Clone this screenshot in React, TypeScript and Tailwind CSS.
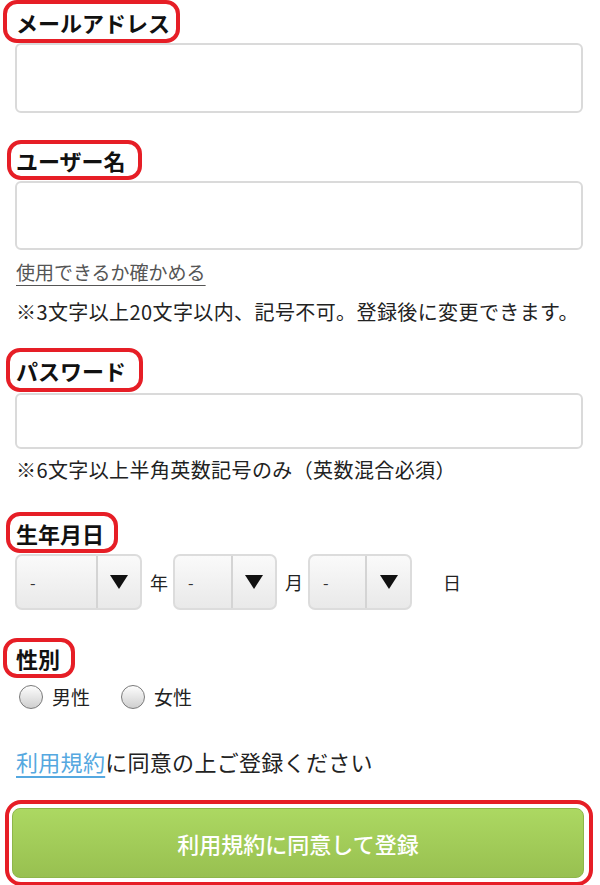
import { useState } from 'react';

const FONT = { fontFamily: '"Noto Sans CJK JP", "Noto Sans", sans-serif' };

function Label({ text, className }: { text: string; className: string }) {
  return (
    <div
      className={`flex items-center rounded-[14px] border-4 border-[#e61e26] text-[22px] font-bold leading-none text-[#111] ${className}`}
    >
      {text}
    </div>
  );
}

function TextInput({ className }: { className: string }) {
  return (
    <input
      type="text"
      className={`mx-[15px] block w-[568px] rounded-[6px] border-2 border-[#dadada] bg-white px-3 text-[19px] outline-none ${className}`}
    />
  );
}

function DateSelect({ width, left }: { width: string; left: string }) {
  return (
    <div
      className={`flex h-[56px] overflow-hidden rounded-[7px] border-2 border-[#dcdcdc] bg-gradient-to-b from-[#fafafa] to-[#e9e9e9] ${width}`}
    >
      <div className={`flex items-center pl-[13px] text-[16px] text-[#333] ${left}`}>-</div>
      <div className="flex flex-1 items-center justify-center border-l-2 border-[#d4d4d4]">
        <svg width="18" height="14" viewBox="0 0 18 14">
          <polygon points="0,0 18,0 9,14" fill="#111" />
        </svg>
      </div>
    </div>
  );
}

function Radio({ label, checked, onClick }: { label: string; checked: boolean; onClick: () => void }) {
  return (
    <button type="button" onClick={onClick} className="flex items-center gap-[9px]">
      <span className="flex h-[24px] w-[24px] items-center justify-center rounded-full border border-[#7a7a7a] bg-gradient-to-b from-[#fdfdfd] to-[#cfcfcf]">
        {checked ? <span className="h-[10px] w-[10px] rounded-full bg-[#333]" /> : null}
      </span>
      <span className="text-[19px] text-[#222]">{label}</span>
    </button>
  );
}

export default function App() {
  const [gender, setGender] = useState<'male' | 'female' | null>(null);

  return (
    <div className="h-[885px] w-[600px] overflow-hidden bg-white" style={FONT}>
      <Label text="メールアドレス" className="ml-[3px] h-[43px] w-[177px] pl-[9px]" />
      <TextInput className="h-[70px]" />

      <Label text="ユーザー名" className="ml-[7px] mt-[27px] h-[40px] w-[135px] pl-[5px]" />
      <TextInput className="mt-[1px] h-[69px]" />

      <div className="ml-[16px] mt-[8px] h-[28px] text-[19px] leading-[28px] text-[#555] underline underline-offset-[5px]">
        使用できるか確かめる
      </div>
      <div className="ml-[16px] mt-[12px] h-[28px] whitespace-nowrap text-[20px] leading-[28px] tracking-[0.4px] text-[#222]">
        ※3文字以上20文字以内、記号不可。登録後に変更できます。
      </div>

      <Label text="パスワード" className="ml-[6px] mt-[22px] h-[44px] w-[137px] pl-[6px]" />
      <input
        type="password"
        className="mx-[15px] mt-[1px] block h-[56px] w-[568px] rounded-[6px] border-2 border-[#dadada] bg-white px-3 outline-none"
      />
      <div className="ml-[16px] mt-[7px] h-[28px] whitespace-nowrap text-[20px] leading-[28px] tracking-[0.4px] text-[#222]">
        ※6文字以上半角英数記号のみ（英数混合必須）
      </div>

      <Label text="生年月日" className="ml-[6px] mt-[28px] h-[41px] w-[112px] pl-[6px]" />
      <div className="ml-[15px] mt-[1px] flex items-center text-[18px] text-[#222]">
        <DateSelect width="w-[127px]" left="w-[79px]" />
        <span className="ml-[8px] mr-[5px]">年</span>
        <DateSelect width="w-[104px]" left="w-[56px]" />
        <span className="ml-[8px] mr-[5px]">月</span>
        <DateSelect width="w-[104px]" left="w-[55px]" />
        <span className="ml-[31px]">日</span>
      </div>

      <Label text="性別" className="ml-[3px] mt-[28px] h-[40px] w-[72px] pl-[9px]" />
      <div className="ml-[19px] mt-[5px] flex h-[28px] items-center gap-[31px]">
        <Radio label="男性" checked={gender === 'male'} onClick={() => setGender('male')} />
        <Radio label="女性" checked={gender === 'female'} onClick={() => setGender('female')} />
      </div>

      <div className="ml-[16px] mt-[35px] h-[30px] text-[22px] leading-[30px] tracking-[0.3px] text-[#222]">
        <a href="#" className="text-[#55a8e0] underline underline-offset-[5px]">
          利用規約
        </a>
        に同意の上ご登録ください
      </div>

      <div className="ml-[5px] mt-[24px] h-[86px] w-[588px] rounded-[16px] border-4 border-[#e61e26] px-[1px] pt-[2px]">
        <div className="rounded-[10px] border-2 border-white">
          <button
            type="button"
            className="flex h-[70px] w-[572px] items-center justify-center rounded-[8px] border border-[#8db64a] bg-gradient-to-b from-[#acd862] to-[#98c050] text-[22px] font-medium text-white"
          >
            利用規約に同意して登録
          </button>
        </div>
      </div>
    </div>
  );
}
